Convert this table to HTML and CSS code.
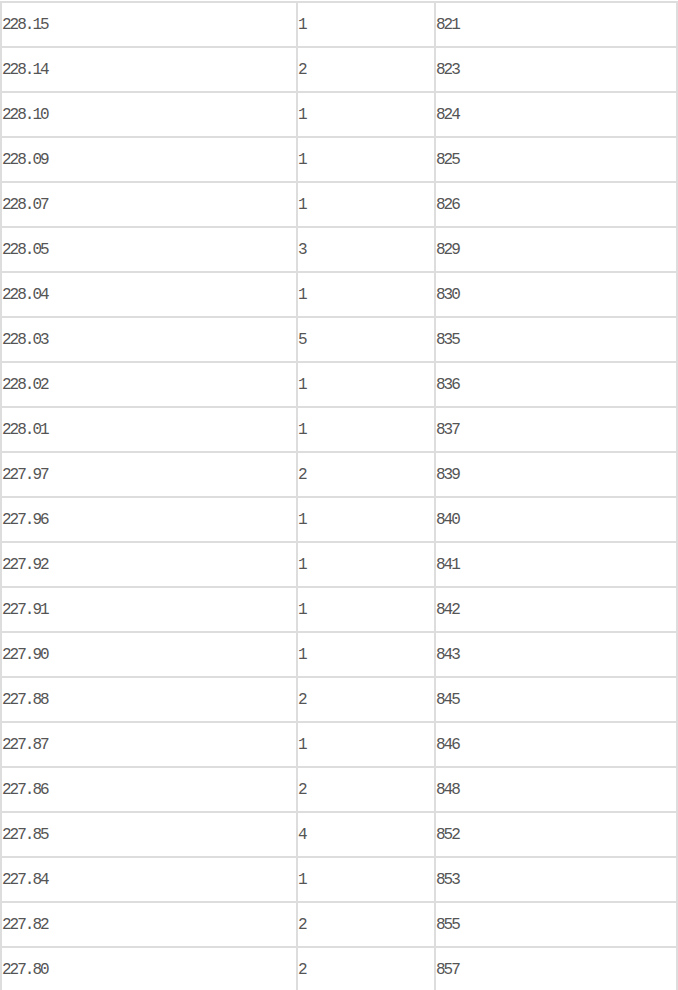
FILE: index.html
```html
<!DOCTYPE html>
<html lang="zh-CN">
<head>
<meta charset="utf-8">
<title>价格分布</title>
<link rel="stylesheet" href="styles.css">
</head>
<body>
<div class="table">
  <div class="row"><div class="cell c1">228.15</div><div class="cell c2">1</div><div class="cell c3">821</div></div>
  <div class="row"><div class="cell c1">228.14</div><div class="cell c2">2</div><div class="cell c3">823</div></div>
  <div class="row"><div class="cell c1">228.10</div><div class="cell c2">1</div><div class="cell c3">824</div></div>
  <div class="row"><div class="cell c1">228.09</div><div class="cell c2">1</div><div class="cell c3">825</div></div>
  <div class="row"><div class="cell c1">228.07</div><div class="cell c2">1</div><div class="cell c3">826</div></div>
  <div class="row"><div class="cell c1">228.05</div><div class="cell c2">3</div><div class="cell c3">829</div></div>
  <div class="row"><div class="cell c1">228.04</div><div class="cell c2">1</div><div class="cell c3">830</div></div>
  <div class="row"><div class="cell c1">228.03</div><div class="cell c2">5</div><div class="cell c3">835</div></div>
  <div class="row"><div class="cell c1">228.02</div><div class="cell c2">1</div><div class="cell c3">836</div></div>
  <div class="row"><div class="cell c1">228.01</div><div class="cell c2">1</div><div class="cell c3">837</div></div>
  <div class="row"><div class="cell c1">227.97</div><div class="cell c2">2</div><div class="cell c3">839</div></div>
  <div class="row"><div class="cell c1">227.96</div><div class="cell c2">1</div><div class="cell c3">840</div></div>
  <div class="row"><div class="cell c1">227.92</div><div class="cell c2">1</div><div class="cell c3">841</div></div>
  <div class="row"><div class="cell c1">227.91</div><div class="cell c2">1</div><div class="cell c3">842</div></div>
  <div class="row"><div class="cell c1">227.90</div><div class="cell c2">1</div><div class="cell c3">843</div></div>
  <div class="row"><div class="cell c1">227.88</div><div class="cell c2">2</div><div class="cell c3">845</div></div>
  <div class="row"><div class="cell c1">227.87</div><div class="cell c2">1</div><div class="cell c3">846</div></div>
  <div class="row"><div class="cell c1">227.86</div><div class="cell c2">2</div><div class="cell c3">848</div></div>
  <div class="row"><div class="cell c1">227.85</div><div class="cell c2">4</div><div class="cell c3">852</div></div>
  <div class="row"><div class="cell c1">227.84</div><div class="cell c2">1</div><div class="cell c3">853</div></div>
  <div class="row"><div class="cell c1">227.82</div><div class="cell c2">2</div><div class="cell c3">855</div></div>
  <div class="row"><div class="cell c1">227.80</div><div class="cell c2">2</div><div class="cell c3">857</div></div>
</div>
</body>
</html>
```
FILE: styles.css
```css
* {
  box-sizing: border-box;
}

html, body {
  margin: 0;
  padding: 0;
  background: #ffffff;
}

.table {
  width: 678px;
  margin-top: 1px;
  font-family: "Liberation Mono", "Noto Sans CJK SC", monospace;
  font-size: 16px;
  letter-spacing: -2px;
  color: #555555;
}

.row {
  display: grid;
  grid-template-columns: 296px 138px 244px;
  height: 45px;
  border-top: 2px solid #dddddd;
}

.cell {
  display: flex;
  align-items: center;
  padding-left: 0;
  border-left: 2px solid #dddddd;
}

.c3 {
  border-right: 2px solid #dddddd;
}
```
